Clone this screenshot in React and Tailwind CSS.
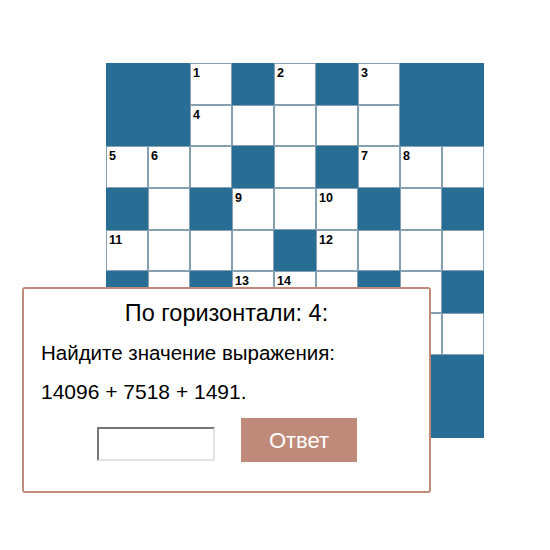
import React, { useState } from "react";

// '#' = closed cell, '.' = open cell
const layout = [
  "##.#.#.##",
  "##.....##",
  "...#.#...",
  "#.#...#.#",
  "....#....",
  "#.#...#.#",
  "...#.....",
  ".#...#.##",
  "...#...##",
];

const numbers = {
  "0-2": 1,
  "0-4": 2,
  "0-6": 3,
  "1-2": 4,
  "2-0": 5,
  "2-1": 6,
  "2-6": 7,
  "2-7": 8,
  "3-3": 9,
  "3-5": 10,
  "4-0": 11,
  "4-5": 12,
  "5-3": 13,
  "5-4": 14,
};

const Cell = ({ closed, num }) => {
  if (closed) {
    return <div className="bg-[#286d93]" />;
  }
  return (
    <div className="border border-[#86a0b1] bg-white pl-[2px] pt-[2px] text-[12.5px] font-bold leading-[15px] text-black">
      {num}
    </div>
  );
};

const App = () => {
  const [answer, setAnswer] = useState("");

  return (
    <div className="relative h-[550px] w-[550px] bg-white font-['Liberation_Sans',Arial,sans-serif]">
      <div className="pl-[106px] pt-[63px]">
        <div className="grid w-[378px] grid-cols-[repeat(9,42px)] grid-rows-[repeat(9,41.67px)]">
          {layout.map((row, r) =>
            row
              .split("")
              .map((c, col) => (
                <Cell
                  key={`${r}-${col}`}
                  closed={c === "#"}
                  num={numbers[`${r}-${col}`]}
                />
              ))
          )}
        </div>
      </div>

      <div className="absolute left-[22px] top-[287px] flex h-[206px] w-[409px] flex-col rounded-[3px] border-2 border-[#c08a7b] bg-white px-[17px] pt-[10px] text-black">
        <div className="text-center text-[23.5px] leading-[28px]">
          По горизонтали: 4:
        </div>
        <div className="mt-[13px] text-[20.5px] leading-[26px]">
          Найдите значение выражения:
        </div>
        <div className="mt-[13px] text-[21px] leading-[26px]">
          14096 + 7518 + 1491.
        </div>
        <div className="mt-[13px] flex items-center gap-[26px] pl-[56px]">
          <input
            value={answer}
            onChange={(e) => setAnswer(e.target.value)}
            className="mt-[7px] h-[34px] w-[118px] border-2 border-b-[#e3e3e3] border-l-[#767676] border-r-[#e3e3e3] border-t-[#767676] bg-white px-1 outline-none"
          />
          <button className="h-[44px] w-[116px] bg-[#c08a7b] text-[22px] text-white">
            Ответ
          </button>
        </div>
      </div>
    </div>
  );
};

export default App;
